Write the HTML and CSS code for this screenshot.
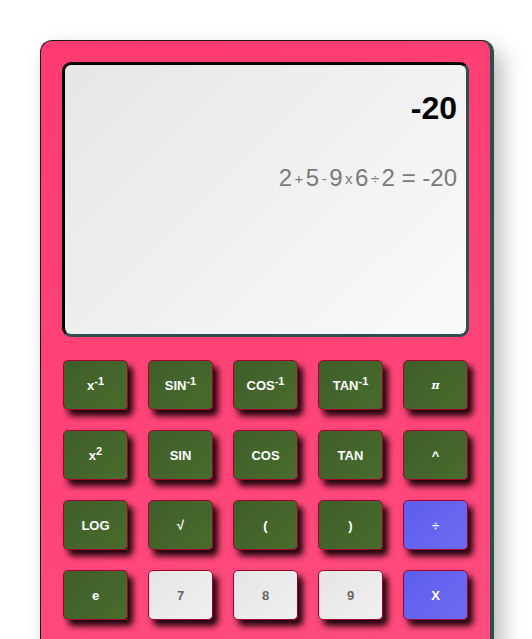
FILE: index.html
```html
<!DOCTYPE html>
<html>
<head>
<meta charset="utf-8">
<link rel="stylesheet" href="styles.css">
</head>
<body>
<div class="calc">
  <div class="screen">
    <div class="result">-20</div>
    <div class="expr">2<span class="op">+</span>5<span class="op">-</span>9<span class="op">x</span>6<span class="op">÷</span>2 = -20</div>
  </div>
  <div class="keys">
    <button class="key fn">x<sup>-1</sup></button>
    <button class="key fn">SIN<sup>-1</sup></button>
    <button class="key fn">COS<sup>-1</sup></button>
    <button class="key fn">TAN<sup>-1</sup></button>
    <button class="key fn pi">π</button>
    <button class="key fn">x<sup>2</sup></button>
    <button class="key fn">SIN</button>
    <button class="key fn">COS</button>
    <button class="key fn">TAN</button>
    <button class="key fn">^</button>
    <button class="key fn">LOG</button>
    <button class="key fn">√</button>
    <button class="key fn">(</button>
    <button class="key fn">)</button>
    <button class="key op-key">÷</button>
    <button class="key fn">e</button>
    <button class="key num">7</button>
    <button class="key num">8</button>
    <button class="key num">9</button>
    <button class="key op-key">X</button>
  </div>
</div>
</body>
</html>
```
FILE: styles.css
```css
html, body {
  margin: 0;
  padding: 0;
  background: #ffffff;
  overflow: hidden;
}
body {
  font-family: "Liberation Sans", Arial, sans-serif;
}
.calc {
  margin: 40px 0 0 40px;
  width: 407px;
  padding: 21px 21px 40px 21px;
  background: linear-gradient(160deg, #ff3a70 0%, #ff4c7e 100%);
  border: 1px solid #1a1a1a;
  border-right: 4px solid #2f4f4f;
  border-bottom: 4px solid #2f4f4f;
  border-radius: 12px;
  box-shadow: 8px 10px 22px rgba(0, 0, 0, 0.28);
}
.screen {
  box-sizing: border-box;
  height: 275px;
  border: 3px solid #000;
  border-right-color: #2f4f4f;
  border-bottom-color: #2f4f4f;
  border-radius: 9px;
  background: linear-gradient(135deg, #e6e6e6 0%, #fafafa 100%);
  padding: 25px 9px 0 0;
  text-align: right;
}
.result {
  font-size: 32px;
  font-weight: bold;
  color: #000;
}
.expr {
  margin-top: 37px;
  font-size: 24px;
  color: #7a7a7a;
}
.expr .op {
  font-size: 15px;
  margin: 0 2.5px;
  vertical-align: 2px;
}
.keys {
  margin-top: 23px;
  display: grid;
  grid-template-columns: repeat(5, 65px);
  grid-auto-rows: 50px;
  gap: 20px;
  justify-content: center;
}
.key {
  border: 1px solid #a3002f;
  border-radius: 5px;
  box-shadow: 5px 6px 6px rgba(20, 0, 6, 0.95);
  font-family: "Liberation Sans", Arial, sans-serif;
  font-size: 13px;
  font-weight: bold;
  color: #fff;
  padding: 0;
  cursor: pointer;
}
.key sup {
  font-size: 11px;
  line-height: 0;
  vertical-align: 5px;
}
.fn {
  background: linear-gradient(135deg, #3f5e29 0%, #486c2d 100%);
}
.pi {
  font-family: "DejaVu Serif", serif;
  font-style: italic;
  font-size: 11px;
}
.num {
  background: linear-gradient(135deg, #e5e5e5 0%, #f0f0f0 100%);
  color: #666;
}
.op-key {
  background: linear-gradient(135deg, #5e5eee 0%, #6b6bf0 100%);
}
```
